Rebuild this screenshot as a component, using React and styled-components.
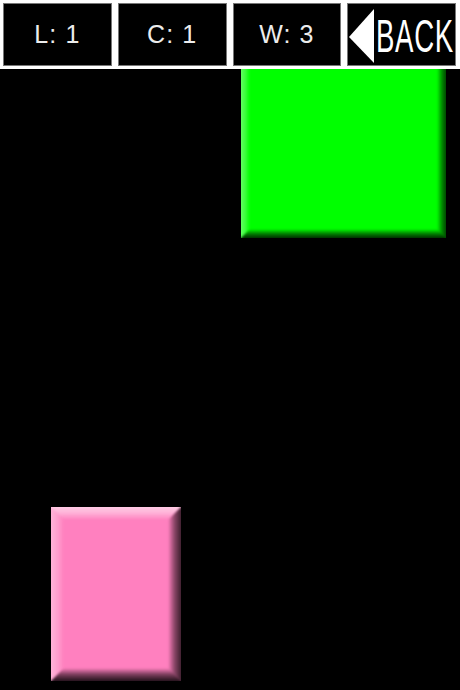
import React from 'react';
import styled, { createGlobalStyle } from 'styled-components';

const GlobalStyle = createGlobalStyle`
  html, body {
    margin: 0;
    padding: 0;
    background: #000;
    font-family: "Liberation Sans", Arial, sans-serif;
  }
`;

const Screen = styled.div`
  width: 460px;
  height: 690px;
  display: flex;
  flex-direction: column;
  overflow: hidden;
  background: #000;
`;

const Toolbar = styled.div`
  display: flex;
  gap: 6px;
  height: 63px;
  padding: 3px 4px 3px 3px;
  background: #fff;
`;

const Cell = styled.div`
  flex: 1;
  min-width: 0;
  display: flex;
  align-items: center;
  justify-content: center;
  box-sizing: border-box;
  background: #000;
  border: 1px solid #777;
  color: #ececec;
  font-size: 25px;
  letter-spacing: 1.1px;
  white-space: nowrap;
`;

const BackButton = styled(Cell)`
  justify-content: flex-start;
`;

const BackGlyphs = styled.svg`
  display: block;
  flex: none;
`;

const BackLabel = styled.text`
  font-family: "Liberation Sans", sans-serif;
  font-size: 46px;
  fill: #fff;
`;

const Board = styled.div`
  position: relative;
  flex: 1;
  overflow: hidden;
  background: #000;
`;

const Block = styled.div`
  position: absolute;
  left: ${(p) => p.$x}px;
  top: ${(p) => p.$y}px;
  width: ${(p) => p.$w}px;
  height: ${(p) => p.$h}px;
  overflow: hidden;
  background: ${(p) => p.$color};
`;

// softens the diagonal seams; pushed past the block so the outer edge stays strong
const BevelLayer = styled.div`
  position: absolute;
  inset: -3px;
  filter: blur(1.2px);
`;

const fade = (rgb, alpha) =>
  `rgba(${rgb},${alpha}) 0%, rgba(${rgb},${alpha}) 20%, rgba(${rgb},${alpha * 0.6}) 60%, rgba(${rgb},0) 100%`;

// each edge of a block is a trapezoid, so the corners meet on a diagonal
const Bevel = styled.div`
  position: absolute;
  inset: 0;
  ${(p) => p.$side === 'top' && `
    background: linear-gradient(to bottom, ${fade('255,255,255', p.$alpha)}) top / 100% ${p.$size}px no-repeat;
    clip-path: polygon(0 0, 100% 0, calc(100% - ${p.$size}px) ${p.$size}px, ${p.$size}px ${p.$size}px);
  `}
  ${(p) => p.$side === 'left' && `
    background: linear-gradient(to right, ${fade('255,255,255', p.$alpha)}) left / ${p.$size}px 100% no-repeat;
    clip-path: polygon(0 0, ${p.$size}px ${p.$size}px, ${p.$size}px calc(100% - ${p.$size}px), 0 100%);
  `}
  ${(p) => p.$side === 'right' && `
    background: linear-gradient(to left, ${fade('0,0,0', p.$alpha)}) right / ${p.$size}px 100% no-repeat;
    clip-path: polygon(100% 0, 100% 100%, calc(100% - ${p.$size}px) calc(100% - ${p.$size}px), calc(100% - ${p.$size}px) ${p.$size}px);
  `}
  ${(p) => p.$side === 'bottom' && `
    background: linear-gradient(to top, ${fade('0,0,0', p.$alpha)}) bottom / 100% ${p.$size}px no-repeat;
    clip-path: polygon(0 100%, 100% 100%, calc(100% - ${p.$size}px) calc(100% - ${p.$size}px), ${p.$size}px calc(100% - ${p.$size}px));
  `}
`;

const BackSign = () => (
  <BackGlyphs width="107" height="61" viewBox="0 0 107 61">
    <polygon points="1,33 26,5 26,59" fill="#fff" />
    <g transform="translate(28 48) scale(0.6 1)">
      <BackLabel>BACK</BackLabel>
    </g>
  </BackGlyphs>
);

const blocks = [
  { x: 241, y: -12, w: 205, h: 181, color: '#00ff00', size: 12 },
  { x: 51, y: 438, w: 130, h: 174, color: '#ff80bf', size: 16 },
];

export default function App() {
  return (
    <Screen>
      <GlobalStyle />
      <Toolbar>
        <Cell>L: 1</Cell>
        <Cell>C: 1</Cell>
        <Cell>W: 3</Cell>
        <BackButton>
          <BackSign />
        </BackButton>
      </Toolbar>
      <Board>
        {blocks.map((b) => (
          <Block key={b.x} $x={b.x} $y={b.y} $w={b.w} $h={b.h} $color={b.color}>
            <BevelLayer>
              <Bevel $side="top" $size={b.size} $alpha={0.6} />
              <Bevel $side="left" $size={b.size} $alpha={0.4} />
              <Bevel $side="right" $size={b.size} $alpha={0.75} />
              <Bevel $side="bottom" $size={b.size} $alpha={0.85} />
            </BevelLayer>
          </Block>
        ))}
      </Board>
    </Screen>
  );
}
